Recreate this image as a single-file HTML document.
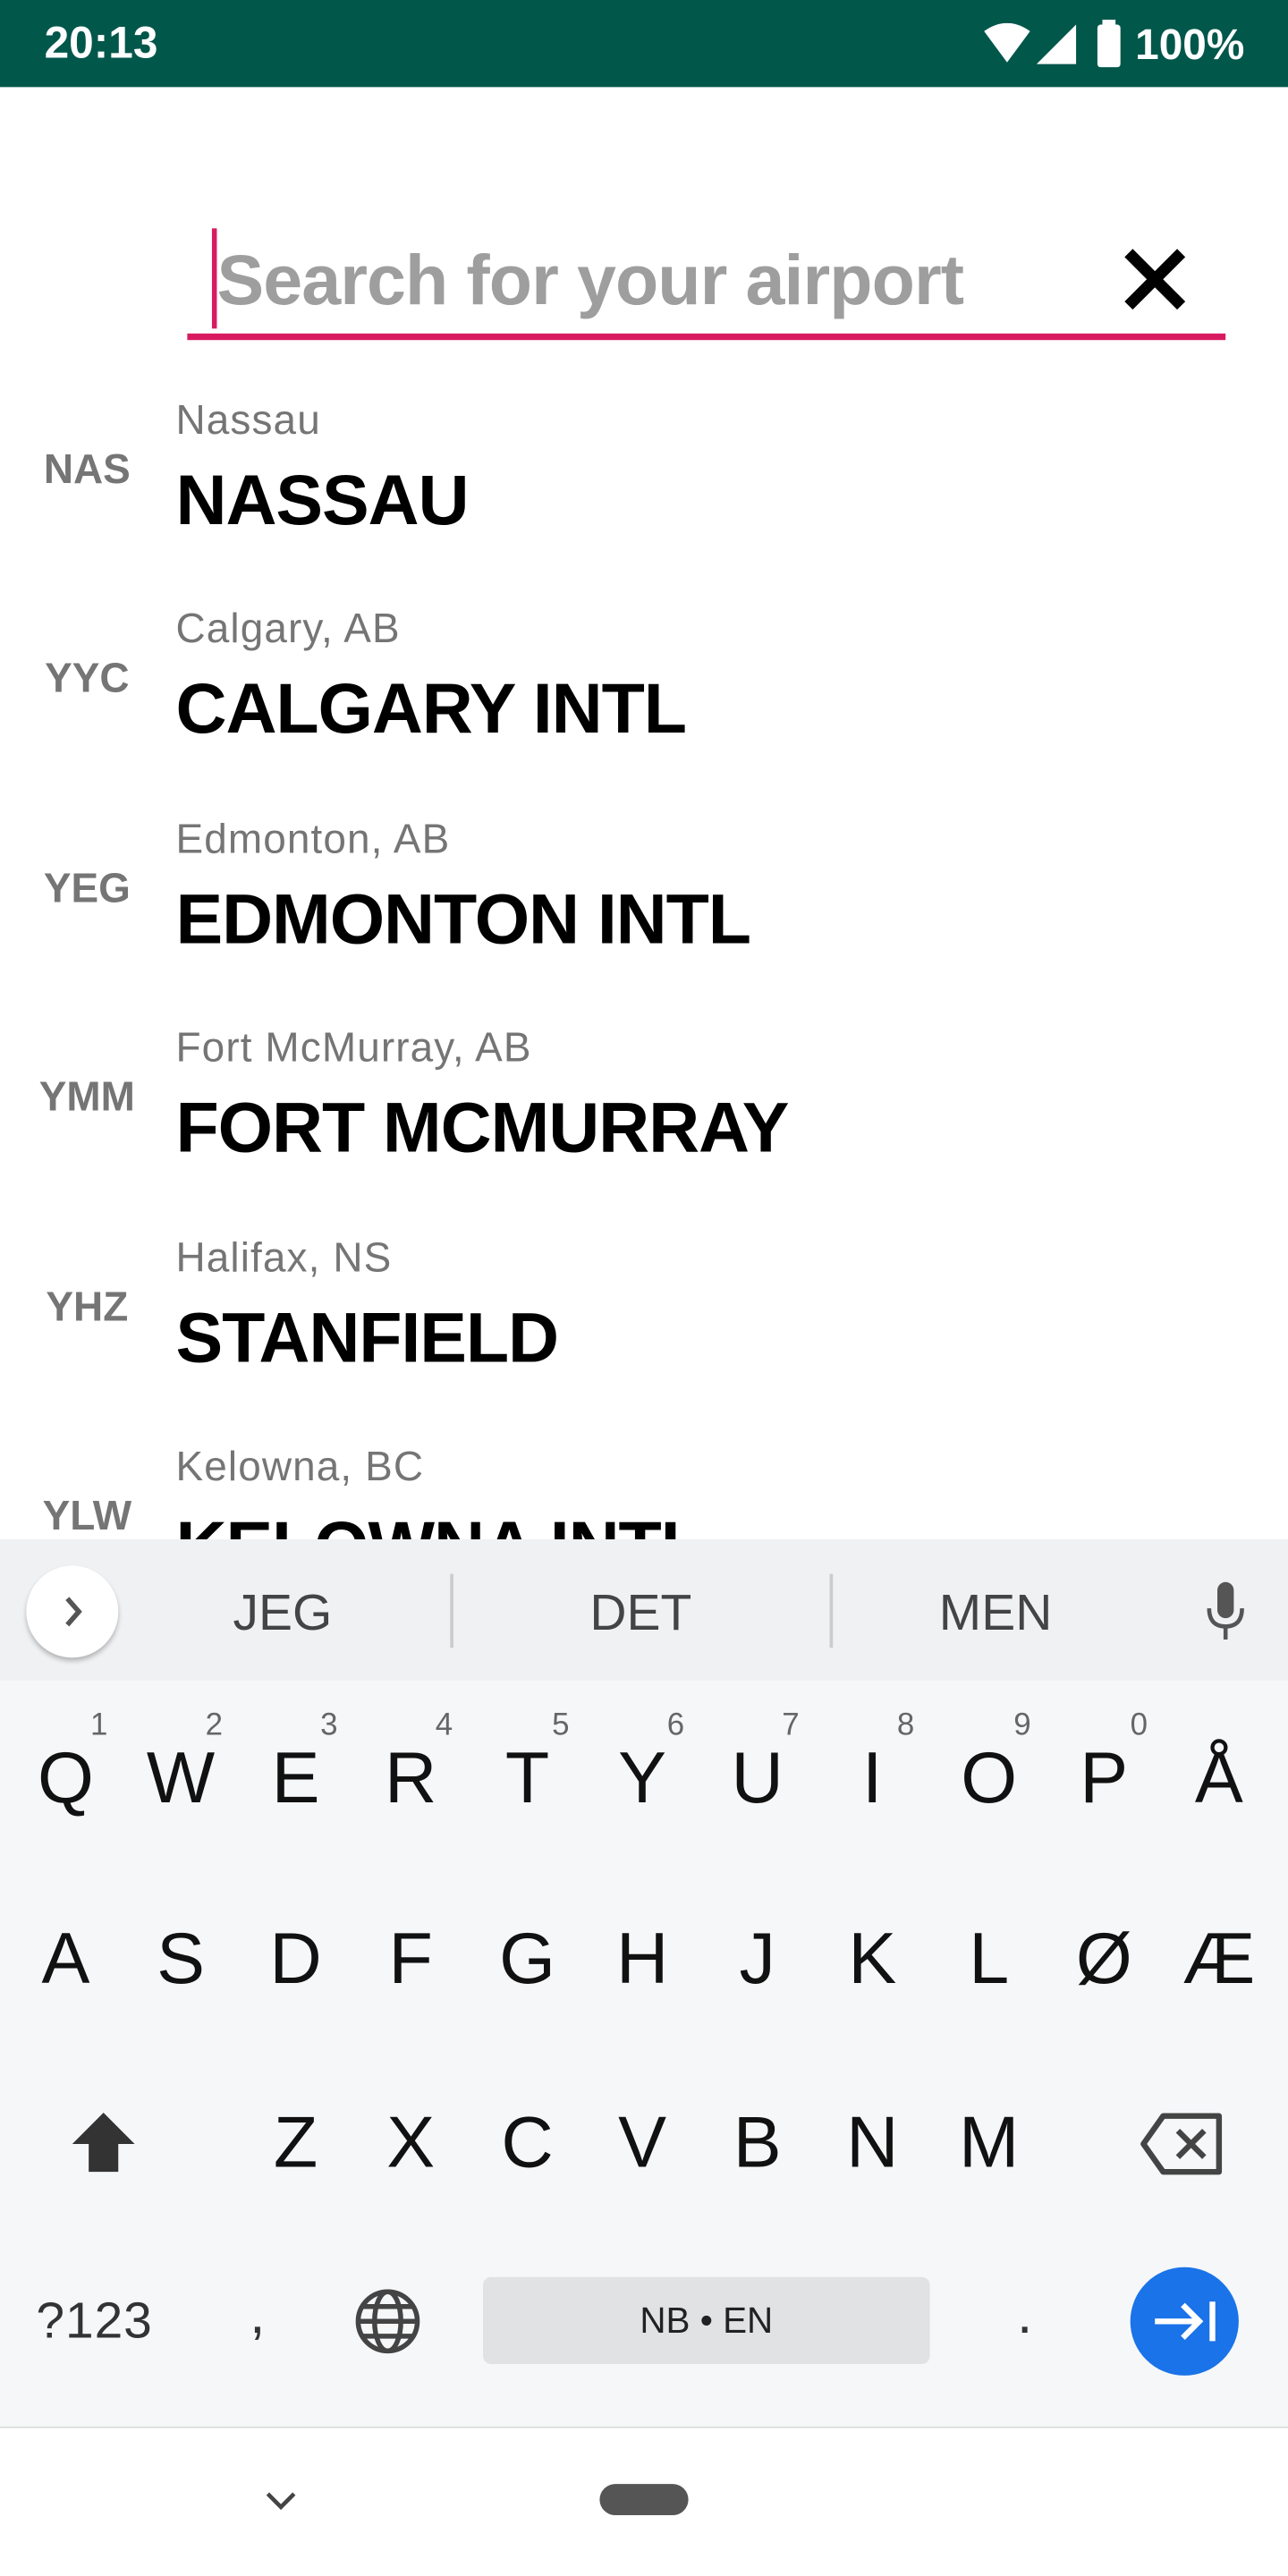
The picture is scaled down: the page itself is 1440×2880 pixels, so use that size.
<!DOCTYPE html>
<html><head><meta charset="utf-8"><style>
*{margin:0;padding:0;box-sizing:border-box}
body{width:1440px;height:2880px;overflow:hidden;background:#fff;font-family:"Liberation Sans",sans-serif}
#s{width:784px;height:1568px;transform:scale(1.836735);transform-origin:0 0;position:relative;background:#fff}
.a{position:absolute;white-space:nowrap}
.sb{position:absolute;left:0;top:0;width:784px;height:53px;background:#02574b;color:#fff}
.code{position:absolute;width:90px;text-align:center;left:8px;font-weight:bold;font-size:25px;color:#757575}
.city{position:absolute;left:107px;font-size:25px;color:#757575;letter-spacing:0.6px}
.name{position:absolute;left:107px;font-size:43px;font-weight:bold;color:#000;letter-spacing:-0.6px}
.k{position:absolute;width:60px;text-align:center;font-size:44px;color:#111;transform:translateX(-30px)}
.n{position:absolute;font-size:19px;color:#666}
</style></head><body><div id="s">
<div class="sb">
<div class="a" style="left:27px;top:11px;font-size:27px;font-weight:bold">20:13</div>
<svg class="a" style="left:598px;top:14px" width="30" height="26" viewBox="0 0 30 26"><path d="M1 5Q15-5 29 5L15 24Z" fill="#fff"/></svg>
<svg class="a" style="left:630px;top:14px" width="26" height="26"><path d="M25 1V25H1Z" fill="#fff"/></svg>
<svg class="a" style="left:667px;top:12px" width="16" height="29"><rect x="4" y="0" width="8" height="4" fill="#fff"/><rect x="1" y="3" width="14" height="26" rx="2" fill="#fff"/></svg>
<div class="a" style="left:691px;top:12px;font-size:26px;font-weight:bold">100%</div>
</div>
<div class="a" style="left:129px;top:139px;width:3px;height:61px;background:#d81b60"></div>
<div class="a" style="left:132px;top:147px;font-size:43px;font-weight:bold;color:#9e9e9e;letter-spacing:-0.5px">Search for your airport</div>
<svg class="a" style="left:683px;top:151px" width="40" height="38"><path d="M4 3L36 35M36 3L4 35" stroke="#000" stroke-width="7"/></svg>
<div class="a" style="left:114px;top:203px;width:632px;height:4px;background:#d81b60"></div>
<div style="position:absolute;left:0;top:0;width:784px;height:937px;overflow:hidden">
<div class="city" style="top:242px">Nassau</div><div class="code" style="top:272px">NAS</div><div class="name" style="top:281px">NASSAU</div>
<div class="city" style="top:369px">Calgary, AB</div><div class="code" style="top:399px">YYC</div><div class="name" style="top:408px">CALGARY INTL</div>
<div class="city" style="top:497px">Edmonton, AB</div><div class="code" style="top:527px">YEG</div><div class="name" style="top:536px">EDMONTON INTL</div>
<div class="city" style="top:624px">Fort McMurray, AB</div><div class="code" style="top:654px">YMM</div><div class="name" style="top:663px">FORT MCMURRAY</div>
<div class="city" style="top:752px">Halifax, NS</div><div class="code" style="top:782px">YHZ</div><div class="name" style="top:791px">STANFIELD</div>
<div class="city" style="top:879px">Kelowna, BC</div><div class="code" style="top:909px">YLW</div><div class="name" style="top:918px">KELOWNA INTL</div>
</div>
<div class="a" style="left:0;top:937px;width:784px;height:86px;background:#f0f1f3"></div>
<div class="a" style="left:0;top:1023px;width:784px;height:455px;background:#f6f7f9"></div>
<div class="a" style="left:16px;top:953px;width:56px;height:56px;border-radius:50%;background:#fff;box-shadow:0 2px 3px rgba(0,0,0,.25)"></div>
<svg class="a" style="left:34px;top:970px" width="20" height="22"><path d="M7 3L14 11L7 19" stroke="#555" stroke-width="3" fill="none"/></svg>
<div class="a" style="left:122px;top:964px;width:100px;text-align:center;font-size:31px;color:#444">JEG</div>
<div class="a" style="left:274px;top:958px;width:2px;height:45px;background:#ccc"></div>
<div class="a" style="left:340px;top:964px;width:100px;text-align:center;font-size:31px;color:#444">DET</div>
<div class="a" style="left:505px;top:958px;width:2px;height:45px;background:#ccc"></div>
<div class="a" style="left:556px;top:964px;width:100px;text-align:center;font-size:31px;color:#444">MEN</div>
<svg class="a" style="left:732px;top:962px" width="28" height="38"><rect x="9" y="1" width="10" height="22" rx="5" fill="#555"/><path d="M4 17Q4 28 14 28Q24 28 24 17M14 28V36" stroke="#555" stroke-width="2.5" fill="none"/></svg>
<div class="k" style="left:40px;top:1058px">Q</div><div class="k" style="left:110px;top:1058px">W</div><div class="k" style="left:180px;top:1058px">E</div><div class="k" style="left:250px;top:1058px">R</div><div class="k" style="left:321px;top:1058px">T</div><div class="k" style="left:391px;top:1058px">Y</div><div class="k" style="left:461px;top:1058px">U</div><div class="k" style="left:531px;top:1058px">I</div><div class="k" style="left:602px;top:1058px">O</div><div class="k" style="left:672px;top:1058px">P</div><div class="k" style="left:742px;top:1058px">Å</div>
<div class="n" style="left:55px;top:1040px">1</div><div class="n" style="left:125px;top:1040px">2</div><div class="n" style="left:195px;top:1040px">3</div><div class="n" style="left:265px;top:1040px">4</div><div class="n" style="left:336px;top:1040px">5</div><div class="n" style="left:406px;top:1040px">6</div><div class="n" style="left:476px;top:1040px">7</div><div class="n" style="left:546px;top:1040px">8</div><div class="n" style="left:617px;top:1040px">9</div><div class="n" style="left:688px;top:1040px">0</div>
<div class="k" style="left:40px;top:1168px">A</div><div class="k" style="left:110px;top:1168px">S</div><div class="k" style="left:180px;top:1168px">D</div><div class="k" style="left:250px;top:1168px">F</div><div class="k" style="left:321px;top:1168px">G</div><div class="k" style="left:391px;top:1168px">H</div><div class="k" style="left:461px;top:1168px">J</div><div class="k" style="left:531px;top:1168px">K</div><div class="k" style="left:602px;top:1168px">L</div><div class="k" style="left:672px;top:1168px">Ø</div><div class="k" style="left:742px;top:1168px">Æ</div>
<svg class="a" style="left:42px;top:1284px" width="42" height="40"><path d="M21 2L40 21H30V38H12V21H2Z" fill="#333"/></svg>
<div class="k" style="left:180px;top:1280px">Z</div><div class="k" style="left:250px;top:1280px">X</div><div class="k" style="left:321px;top:1280px">C</div><div class="k" style="left:391px;top:1280px">V</div><div class="k" style="left:461px;top:1280px">B</div><div class="k" style="left:531px;top:1280px">N</div><div class="k" style="left:602px;top:1280px">M</div>
<svg class="a" style="left:694px;top:1286px" width="52" height="38"><path d="M14 2H48V36H14L2 19Z" stroke="#444" stroke-width="3.5" fill="none" stroke-linejoin="round"/><path d="M23 11L39 27M39 11L23 27" stroke="#444" stroke-width="3.5"/></svg>
<div class="a" style="left:22px;top:1395px;font-size:31px;color:#333;letter-spacing:0.5px">?123</div>
<div class="a" style="left:152px;top:1390px;font-size:34px;color:#333">,</div>
<svg class="a" style="left:215px;top:1392px" width="42" height="42" viewBox="0 0 42 42"><g stroke="#444" stroke-width="3" fill="none"><circle cx="21" cy="21" r="18"/><ellipse cx="21" cy="21" rx="8" ry="18"/><path d="M3 21H39M6 12H36M6 30H36"/></g></svg>
<div class="a" style="left:294px;top:1386px;width:272px;height:53px;border-radius:5px;background:#e1e2e4;text-align:center;line-height:53px;font-size:22px;color:#222">NB • EN</div>
<div class="a" style="left:619px;top:1390px;font-size:34px;color:#333">.</div>
<div class="a" style="left:688px;top:1380px;width:66px;height:66px;border-radius:50%;background:#1a73e8"></div>
<svg class="a" style="left:700px;top:1398px" width="44" height="30"><path d="M3 15H30M20 5L30 15L20 25M38 3V27" stroke="#fff" stroke-width="3.5" fill="none"/></svg>
<div class="a" style="left:0;top:1477px;width:784px;height:1px;background:#ddd"></div>
<svg class="a" style="left:160px;top:1514px" width="22" height="16"><path d="M3 4L11 12L19 4" stroke="#444" stroke-width="2.5" fill="none"/></svg>
<div class="a" style="left:365px;top:1512px;width:54px;height:19px;border-radius:10px;background:#555"></div>
</div></body></html>
